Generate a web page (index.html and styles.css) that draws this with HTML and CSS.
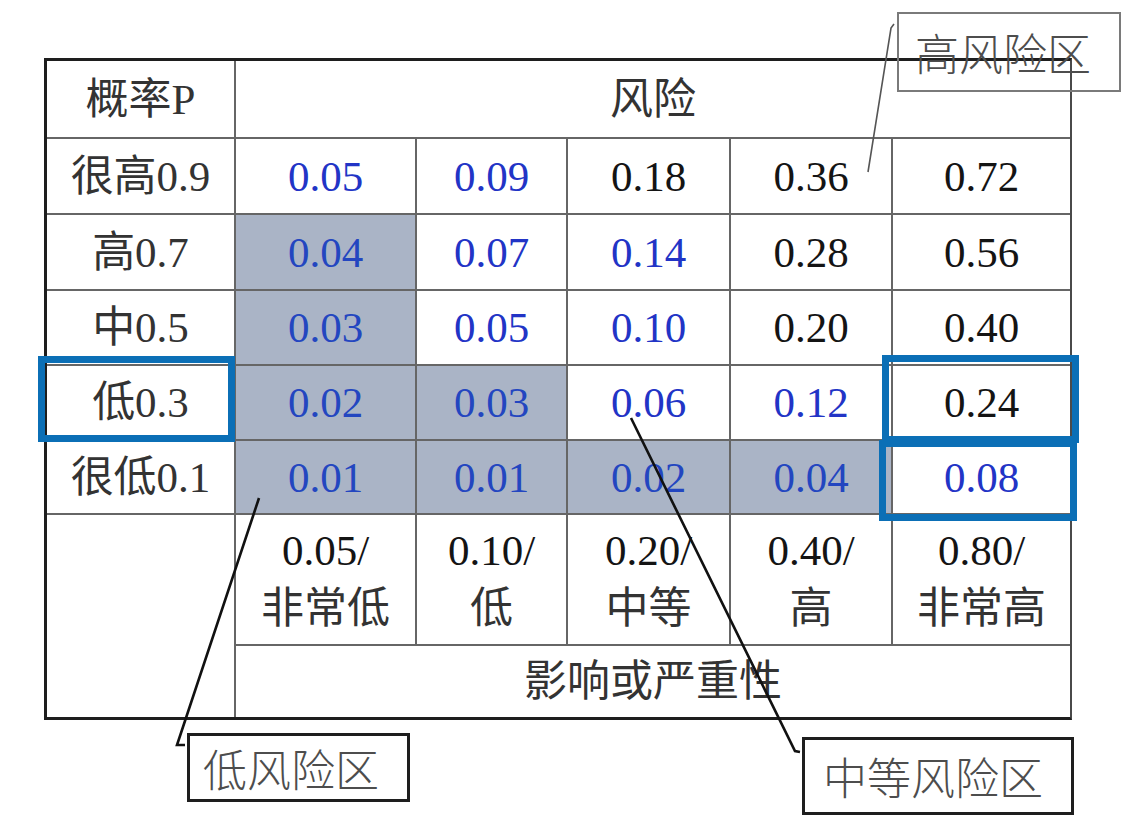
FILE: index.html
```html
<!DOCTYPE html>
<html lang="zh-CN">
<head>
<meta charset="utf-8">
<title>风险矩阵</title>
<link rel="stylesheet" href="styles.css">
</head>
<body>
<div class="page">
  <div class="matrix">
    <div class="cell head">概率P</div>
    <div class="cell head span5">风险</div>

    <div class="cell rowhead">很高0.9</div>
    <div class="cell b">0.05</div>
    <div class="cell b">0.09</div>
    <div class="cell">0.18</div>
    <div class="cell">0.36</div>
    <div class="cell">0.72</div>

    <div class="cell rowhead">高0.7</div>
    <div class="cell b low">0.04</div>
    <div class="cell b">0.07</div>
    <div class="cell b">0.14</div>
    <div class="cell">0.28</div>
    <div class="cell">0.56</div>

    <div class="cell rowhead">中0.5</div>
    <div class="cell b low">0.03</div>
    <div class="cell b">0.05</div>
    <div class="cell b">0.10</div>
    <div class="cell">0.20</div>
    <div class="cell">0.40</div>

    <div class="cell rowhead">低0.3</div>
    <div class="cell b low">0.02</div>
    <div class="cell b low">0.03</div>
    <div class="cell b">0.06</div>
    <div class="cell b">0.12</div>
    <div class="cell">0.24</div>

    <div class="cell rowhead">很低0.1</div>
    <div class="cell b low">0.01</div>
    <div class="cell b low">0.01</div>
    <div class="cell b low">0.02</div>
    <div class="cell b low">0.04</div>
    <div class="cell b">0.08</div>

    <div class="cell blank"></div>
    <div class="cell impact"><span>0.05/</span><span class="cjk">非常低</span></div>
    <div class="cell impact"><span>0.10/</span><span class="cjk">低</span></div>
    <div class="cell impact"><span>0.20/</span><span class="cjk">中等</span></div>
    <div class="cell impact"><span>0.40/</span><span class="cjk">高</span></div>
    <div class="cell impact"><span>0.80/</span><span class="cjk">非常高</span></div>

    <div class="cell head span5">影响或严重性</div>
  </div>

  <div class="hl hl-left"></div>
  <div class="hl hl-right-top"></div>
  <div class="hl hl-right-bottom"></div>

  <svg class="leaders" width="1147" height="825" viewBox="0 0 1147 825">
    <path class="thin" d="M868 172 L891 28 L894 24"/>
    <path d="M259 498 L177 745 L185 745"/>
    <path d="M631 418 L795 751 L800 752"/>
  </svg>

  <div class="label label-high">高风险区</div>
  <div class="label label-low">低风险区</div>
  <div class="label label-mid">中等风险区</div>
</div>
</body>
</html>
```

FILE: styles.css
```css
html, body {
  margin: 0;
  padding: 0;
  background: #ffffff;
}

.page {
  position: relative;
  width: 1147px;
  height: 825px;
  overflow: hidden;
  padding: 58px 0 0 44px;
  box-sizing: border-box;
  font-family: "Liberation Serif", "Noto Sans CJK SC", serif;
}

.matrix {
  display: grid;
  grid-template-columns: 187px 179px 149px 161px 160px 177px;
  grid-template-rows: 76px 74px 74px 73px 73px 72px 129px 71px;
  gap: 2px;
  width: max-content;
  background: #666666;
  border-top: 3px solid #1e1e1e;
  border-left: 3px solid #1e1e1e;
  border-bottom: 3px solid #1e1e1e;
  border-right: 2px solid #4a4a4a;
}

.cell {
  display: flex;
  align-items: center;
  justify-content: center;
  background: #ffffff;
  font-size: 43px;
  color: #141414;
  line-height: 1;
}

.head, .rowhead, .cjk {
  color: #333333;
}

.span5 {
  grid-column: span 5;
}

.blank {
  grid-row: span 2;
}

.b {
  color: #2234c6;
}

.low {
  background: #aab4c6;
  color: #2346c0;
}

.impact {
  flex-direction: column;
  line-height: 58px;
  color: #141414;
}

.impact span {
  display: block;
}

.hl {
  position: absolute;
  border: 7px solid #0b6fb6;
  box-sizing: border-box;
}

.hl-left {
  left: 38px;
  top: 356px;
  width: 197px;
  height: 86px;
}

.hl-right-top {
  left: 882px;
  top: 355px;
  width: 197px;
  height: 88px;
}

.hl-right-bottom {
  left: 879px;
  top: 440px;
  width: 198px;
  height: 81px;
}

.leaders {
  position: absolute;
  left: 0;
  top: 0;
  pointer-events: none;
}

.leaders path {
  fill: none;
  stroke: #111111;
  stroke-width: 2.6;
}

.leaders path.thin {
  stroke: #555555;
  stroke-width: 1.6;
}

.label {
  position: absolute;
  box-sizing: border-box;
  display: flex;
  align-items: center;
  font-family: "Noto Sans CJK SC", "Liberation Sans", sans-serif;
  font-weight: 300;
  font-size: 44px;
  line-height: 1;
  color: #4d4d4d;
}

.label-high {
  left: 897px;
  top: 12px;
  width: 224px;
  height: 80px;
  padding-left: 16px;
  border: 2px solid #7a7a7a;
}

.label-low {
  left: 187px;
  top: 733px;
  width: 223px;
  height: 69px;
  padding-left: 13px;
  border: 3px solid #1e1e1e;
  background: #ffffff;
}

.label-mid {
  left: 802px;
  top: 737px;
  width: 272px;
  height: 78px;
  padding-left: 18px;
  border: 3px solid #1e1e1e;
  background: #ffffff;
}
```
